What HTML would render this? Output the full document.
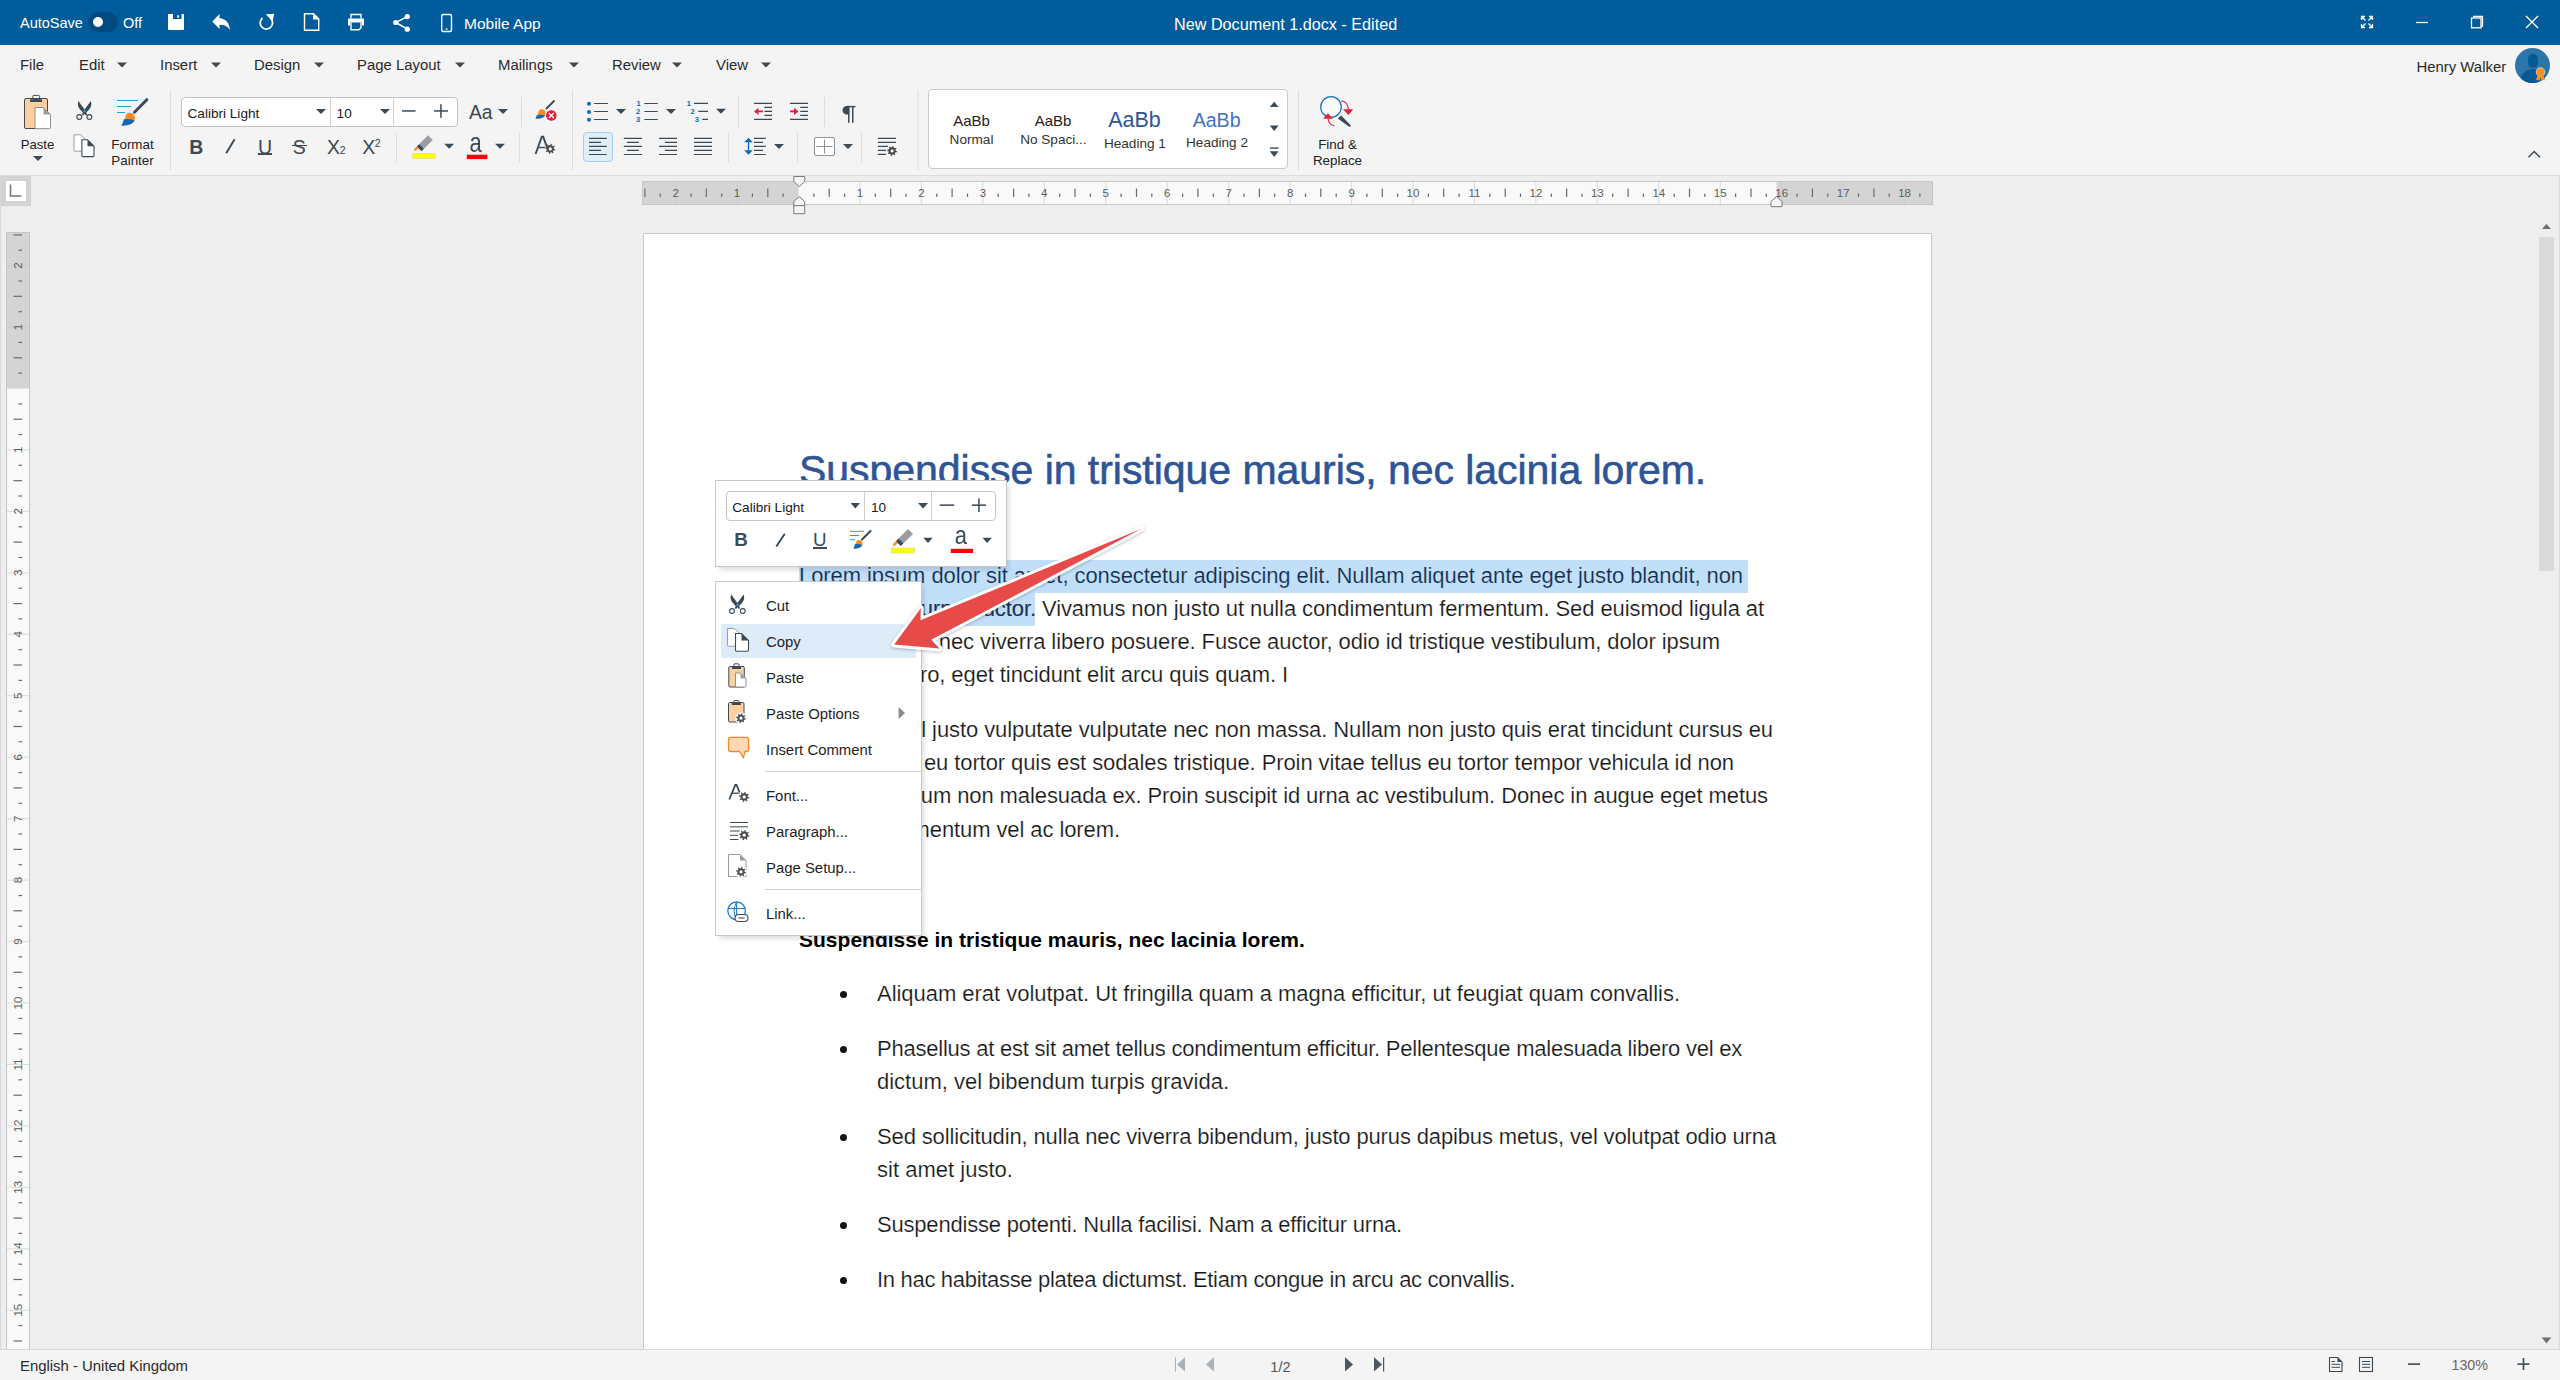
<!DOCTYPE html>
<html><head><meta charset="utf-8">
<style>
*{box-sizing:border-box;margin:0;padding:0}
html,body{width:2560px;height:1380px;overflow:hidden;background:#EEEEEE;font-family:"Liberation Sans",sans-serif;color:#262626;position:relative}
.a{position:absolute}
.t{position:absolute;white-space:nowrap;line-height:1}
svg{position:absolute;overflow:visible}
#title{left:0;top:0;width:2560px;height:45px;background:#015C9B}
#title .t{color:#fff}
#ribbon{left:0;top:45px;width:2560px;height:131px;background:#F4F4F4;border-bottom:1px solid #DCDCDC}
.menu{font-size:15px;color:#2b2b2b}
.caret{position:absolute;width:0;height:0;border-left:5px solid transparent;border-right:5px solid transparent;border-top:5px solid #4A5561}
.sep{position:absolute;width:1px;background:#DADADA}
.lbl{font-size:13.5px;color:#2b2b2b;text-align:center}
#page{left:643px;top:233px;width:1289px;height:1130px;background:#fff;border:1px solid #C6C6C6}
#status{left:0;top:1349px;width:2560px;height:31px;background:#F4F4F4;border-top:1px solid #D8D8D8}
.doc{font-size:21.8px;color:#111}
.rl{display:flex;justify-content:flex-end;overflow:hidden}
.ln{position:absolute;white-space:nowrap;line-height:1;font-size:22px;color:#151515;-webkit-text-stroke:0.2px #fff}
</style></head><body>

<!-- TITLE BAR -->
<div id="title" class="a">
  <div class="t" style="left:20px;top:16.3px;font-size:14.5px">AutoSave</div>
  <div class="a" style="left:88px;top:12px;width:30px;height:20px;border-radius:10px;background:#014A80"></div>
  <div class="a" style="left:93px;top:17px;width:10px;height:10px;border-radius:5px;background:#fff"></div>
  <div class="t" style="left:123px;top:16.3px;font-size:14.5px">Off</div>
  <svg style="left:0;top:0" width="2560" height="45">
    <!-- save -->
    <path d="M168 14H184V29Q184 30 183 30H169Q168 30 168 29Z" fill="#fff"/>
    <rect x="173" y="14" width="8.5" height="5" fill="#015C9B"/>
    <rect x="177.2" y="15.3" width="1.9" height="2.4" fill="#fff"/>
    <!-- undo -->
    <path d="M212.3 21.5L219.5 14V18.3C225.5 18.5 229.5 23 230 30C228 26.5 224.5 24.7 219.5 24.7V29Z" fill="#fff"/>
    <!-- redo circular -->
    <path d="M270.5 18.2A6.2 6.2 0 1 1 262.5 18" fill="none" stroke="#fff" stroke-width="1.8"/>
    <path d="M274.3 13.8L265.8 14.2L272.6 21.2Z" fill="#fff"/>
    <!-- new doc -->
    <path d="M304.5 13.7H313.5L318.7 18.9V30.3H304.5Z" fill="none" stroke="#fff" stroke-width="1.4"/>
    <path d="M313 13.7V19.5H318.7Z" fill="#fff"/>
    <!-- print -->
    <path d="M351 18.5V14.5H361V18.5" fill="none" stroke="#fff" stroke-width="1.4"/>
    <path d="M349 18.5H363Q364 18.5 364 19.5V25.5H362V22.5H350V25.5H348V19.5Q348 18.5 349 18.5Z" fill="#fff"/>
    <path d="M351 22.5V29.8H359L361 27.8V22.5" fill="none" stroke="#fff" stroke-width="1.4"/>
    <!-- share -->
    <path d="M407.3 16.6L395.7 22.5L407.3 29" fill="none" stroke="#fff" stroke-width="1.5"/>
    <circle cx="407.3" cy="16.6" r="2.6" fill="#fff"/>
    <circle cx="395.7" cy="22.5" r="2.6" fill="#fff"/>
    <circle cx="407.3" cy="29.2" r="2.6" fill="#fff"/>
    <!-- phone -->
    <rect x="441.7" y="14.5" width="9.8" height="17" rx="1.5" fill="none" stroke="#fff" stroke-width="1.4"/>
    <rect x="445.6" y="28.5" width="2" height="1.2" fill="#fff"/>
    <!-- fullscreen -->
    <g stroke="#fff" stroke-width="1.3" fill="none">
      <path d="M2361.5 20V16.5H2365M2361.5 16.5L2365.5 20.5"/>
      <path d="M2369 16.5H2372.5V20M2372.5 16.5L2368.5 20.5"/>
      <path d="M2361.5 24V27.5H2365M2361.5 27.5L2365.5 23.5"/>
      <path d="M2369 27.5H2372.5V24M2372.5 27.5L2368.5 23.5"/>
      <!-- minimize -->
      <path d="M2416 22.5H2428"/>
      <!-- restore -->
      <rect x="2471.5" y="18" width="9.5" height="9.8"/>
      <path d="M2473 16.5H2482.5V26.2H2481"/>
      <!-- close -->
      <path d="M2526 16L2538 28M2538 16L2526 28" stroke-width="1.4"/>
    </g>
  </svg>
  <div class="t" style="left:464px;top:15.8px;font-size:15.5px">Mobile App</div>
  <div class="t" style="left:1174px;top:15.8px;font-size:16.2px">New Document 1.docx - Edited</div>
</div>

<!-- RIBBON -->
<div id="ribbon" class="a"></div>
<div id="rib">
<div class="a" style="left:181px;top:97px;width:277px;height:30px;background:#fff;border:1px solid #C4C4C4;border-radius:4px"></div>
<div class="a" style="left:330px;top:98px;width:1px;height:28px;background:#D0D0D0"></div>
<div class="a" style="left:393px;top:98px;width:1px;height:28px;background:#D0D0D0"></div>
<div class="a" style="left:928px;top:89px;width:360px;height:80px;background:#fff;border:1px solid #CACACA;border-radius:4px"></div>
<div class="a" style="left:583px;top:132px;width:30px;height:30px;background:#E1EDF9;border:1px solid #A8CCEE;border-radius:4px"></div>
<div class="t" style="left:20px;top:58.0px;font-size:14.9px;color:#2b2b2b">File</div>
<div class="t" style="left:79px;top:58.0px;font-size:14.9px;color:#2b2b2b">Edit</div>
<div class="t" style="left:160px;top:58.0px;font-size:14.9px;color:#2b2b2b">Insert</div>
<div class="t" style="left:254px;top:58.0px;font-size:14.9px;color:#2b2b2b">Design</div>
<div class="t" style="left:357px;top:58.0px;font-size:14.9px;color:#2b2b2b">Page Layout</div>
<div class="t" style="left:498px;top:58.0px;font-size:14.9px;color:#2b2b2b">Mailings</div>
<div class="t" style="left:612px;top:58.0px;font-size:14.9px;color:#2b2b2b">Review</div>
<div class="t" style="left:716px;top:58.0px;font-size:14.9px;color:#2b2b2b">View</div>
<div class="t" style="left:2416.5px;top:60.1px;font-size:14.9px;color:#2b2b2b">Henry Walker</div>
<div class="t" style="left:-62.5px;width:200px;text-align:center;top:138.4px;font-size:13.2px;color:#222">Paste</div>
<div class="t" style="left:32.5px;width:200px;text-align:center;top:138.1px;font-size:13.4px;color:#222">Format</div>
<div class="t" style="left:32.5px;width:200px;text-align:center;top:154.2px;font-size:13.4px;color:#222">Painter</div>
<div class="t" style="left:1237.5px;width:200px;text-align:center;top:137.8px;font-size:13.4px;color:#222">Find &amp;</div>
<div class="t" style="left:1237.5px;width:200px;text-align:center;top:153.6px;font-size:13.4px;color:#222">Replace</div>
<div class="t" style="left:187.5px;top:107.2px;font-size:13.6px;color:#1a1a1a">Calibri Light</div>
<div class="t" style="left:336.6px;top:107.2px;font-size:13.6px;color:#1a1a1a">10</div>
<div class="t" style="left:871.5px;width:200px;text-align:center;top:113.1px;font-size:15px;color:#222">AaBb</div>
<div class="t" style="left:871.5px;width:200px;text-align:center;top:133.2px;font-size:13.6px;color:#333">Normal</div>
<div class="t" style="left:953px;width:200px;text-align:center;top:113.1px;font-size:15px;color:#222">AaBb</div>
<div class="t" style="left:953.4000000000001px;width:200px;text-align:center;top:133.2px;font-size:13.6px;color:#333">No Spaci...</div>
<div class="t" style="left:1034.5px;width:200px;text-align:center;top:109.8px;font-size:21.5px;color:#2F5496">AaBb</div>
<div class="t" style="left:1034.9px;width:200px;text-align:center;top:136.7px;font-size:13.6px;color:#333">Heading 1</div>
<div class="t" style="left:1116.6px;width:200px;text-align:center;top:111.4px;font-size:19.6px;color:#4472C4">AaBb</div>
<div class="t" style="left:1117px;width:200px;text-align:center;top:136.2px;font-size:13.6px;color:#333">Heading 2</div>
<div class="a" style="left:2515px;top:48px;width:35px;height:35px;border-radius:50%;background:#2C75A8;overflow:hidden"><div class="a" style="left:13px;top:6px;width:10px;height:14px;border-radius:5px;background:#045A96"></div><div class="a" style="left:5px;top:21px;width:26px;height:20px;border-radius:13px 13px 0 0;background:#045A96"></div></div>
<svg style="left:0;top:45px" width="2560" height="131" viewBox="0 45 2560 131">
<g fill="#3C4A55">
<path d="M117 62.5H127L122 67.5Z"/>
<path d="M211 62.5H221L216 67.5Z"/>
<path d="M314 62.5H324L319 67.5Z"/>
<path d="M455 62.5H465L460 67.5Z"/>
<path d="M569 62.5H579L574 67.5Z"/>
<path d="M672 62.5H682L677 67.5Z"/>
<path d="M761 62.5H771L766 67.5Z"/>
<path d="M33.0 155.9H43.0L38 160.9Z"/>
<path d="M316.0 109.0H326.0L321 114.0Z"/>
<path d="M380.0 109.0H390.0L385 114.0Z"/>
<path d="M498.0 109.0H508.0L503 114.0Z"/>
<path d="M444.2 143.8H454.2L449.2 148.8Z"/>
<path d="M495.0 143.8H505.0L500 148.8Z"/>
<path d="M616.0 109.0H626.0L621 114.0Z"/>
<path d="M666.0 109.0H676.0L671 114.0Z"/>
<path d="M716.0 108.8H726.0L721 113.8Z"/>
<path d="M774.0 144.0H784.0L779 149.0Z"/>
<path d="M843.0 144.0H853.0L848 149.0Z"/>
</g>
<rect x="170.0" y="90" width="1" height="80" fill="#DCDCDC"/>
<rect x="572.0" y="90" width="1" height="80" fill="#DCDCDC"/>
<rect x="917.5" y="90" width="1" height="80" fill="#DCDCDC"/>
<rect x="1298.0" y="90" width="1" height="80" fill="#DCDCDC"/>
<rect x="521.0" y="97" width="1" height="30" fill="#DCDCDC"/>
<rect x="396.0" y="133" width="1" height="29" fill="#DCDCDC"/>
<rect x="519.0" y="133" width="1" height="29" fill="#DCDCDC"/>
<rect x="738.0" y="97" width="1" height="30" fill="#DCDCDC"/>
<rect x="824.0" y="97" width="1" height="30" fill="#DCDCDC"/>
<rect x="728.0" y="133" width="1" height="29" fill="#DCDCDC"/>
<rect x="797.0" y="133" width="1" height="29" fill="#DCDCDC"/>
<rect x="861.0" y="133" width="1" height="29" fill="#DCDCDC"/>
<rect x="24.5" y="98.5" width="23" height="30" rx="1.5" fill="#FFD09E" stroke="#3C4A55" stroke-width="1"/>
<rect x="32.8" y="95.4" width="6.8" height="4" rx="1" fill="none" stroke="#3C4A55" stroke-width="1"/>
<rect x="30" y="99.3" width="12" height="2.6" rx="0.5" fill="#3C4A55"/>
<path d="M35 107.5H43.5L50.5 114.5V127.5Q50.5 128.7 49.3 128.7H36.2Q35 128.7 35 127.5Z" fill="#fff" stroke="#8D9296" stroke-width="1"/>
<path d="M43.5 107.5V114.5H50.5Z" fill="#9A9EA2"/>
<path d="M78.4 101Q76.8 105.5 79.7 109L83 112.8L81.8 114.7L83.3 115.5L84.6 113.8L85.9 115.5L87.4 114.7L86.2 112.8L89.5 109Q92.4 105.5 90.8 101L84.6 109.5Z" fill="#3C4A55"/>
<rect x="83.5" y="110" width="2" height="2" fill="#2DA0DE"/>
<circle cx="79.3" cy="117" r="2.4" fill="none" stroke="#3C4A55" stroke-width="1.1"/>
<circle cx="89.4" cy="117" r="2.4" fill="none" stroke="#3C4A55" stroke-width="1.1"/>
<path d="M74 134.8H80.5L85 139V150.5Q85 151.2 84.3 151.2H74.7Q74 151.2 74 150.5Z" fill="#fff" stroke="#9A9EA2" stroke-width="1"/>
<path d="M81.9 139.7H87.5L94 146.2V155.7Q94 156.6 93.1 156.6H82.8Q81.9 156.6 81.9 155.7Z" fill="#fff" stroke="#3C4A55" stroke-width="1.1"/>
<path d="M87.5 139.7V146.2H94Z" fill="#3C4A55"/>
<g stroke="#1EA0E0" stroke-width="1" fill="none"><path d="M117 100.5H138M117 106.5H131M117 112.5H125"/></g>
<path d="M146.8 99.7L134.5 112.2" stroke="#3C4A55" stroke-width="3" stroke-linecap="round"/>
<path d="M128.5 112.8Q135.5 112.2 134.8 119.5Q134 125.5 122 125.7Q125 121 125.5 117Q126 113.2 128.5 112.8Z" fill="#FF8C1A"/>
<path d="M123.8 119.3Q129 118.3 134.5 120.2Q132.5 125.5 121.3 125.7Q123.5 122 123.8 119.3Z" fill="#0B6BBE"/>
<rect x="402" y="110.2" width="13.5" height="1.5" fill="#3C4A55"/>
<rect x="434" y="110.2" width="14" height="1.5" fill="#3C4A55"/><rect x="440.2" y="104.2" width="1.5" height="13.6" fill="#3C4A55"/>
<path d="M554 101L546.5 108.5" stroke="#3C4A55" stroke-width="1.8" stroke-linecap="round"/>
<path d="M540 109.5Q545.5 108.5 545.5 113.5Q545 118.8 535.5 118.8Q537.5 116 538 113.5Q538.5 110 540 109.5Z" fill="#FF8C1A"/>
<path d="M536.8 115.2Q541 114.5 545.2 115.3Q544 118.8 535.5 118.8Z" fill="#0B6BBE"/>
<circle cx="551.3" cy="115.5" r="5.8" fill="#E0213E" stroke="#fff" stroke-width="1"/>
<path d="M548.8 113L553.8 118M553.8 113L548.8 118" stroke="#fff" stroke-width="1.4"/>
<path d="M428 135.2L432.8 140L424 148.8L419.3 144Z" fill="#9A9EA2"/>
<path d="M419.3 144L424 148.8L421.5 151.3L416.8 146.5Z" fill="#3C4A55"/>
<path d="M416.8 146.5L418.5 148.3L416 150.5L414 150.8L414.3 148.8Z" fill="#FF8C1A"/>
<rect x="412.5" y="153.6" width="23" height="5" fill="#FFFF00" stroke="#D8D8A0" stroke-width="0.6"/>
<rect x="466.8" y="154.7" width="20.5" height="4.4" fill="#FF0000"/>
<path d="M535.6 154L541.8 136.8H543.2L548.2 150.5" fill="none" stroke="#3C4A55" stroke-width="1.9"/><path d="M538.3 147.5H545" stroke="#3C4A55" stroke-width="1.4"/>
<path d="M553.97 148.90L555.38 149.38L555.17 150.40L553.69 150.31L553.35 150.94L552.90 151.50L553.55 152.83L552.69 153.41L551.71 152.29L551.02 152.50L550.30 152.57L549.82 153.98L548.80 153.77L548.89 152.29L548.26 151.95L547.70 151.50L546.37 152.15L545.79 151.29L546.91 150.31L546.70 149.62L546.63 148.90L545.22 148.42L545.43 147.40L546.91 147.49L547.25 146.86L547.70 146.30L547.05 144.97L547.91 144.39L548.89 145.51L549.58 145.30L550.30 145.23L550.78 143.82L551.80 144.03L551.71 145.51L552.34 145.85L552.90 146.30L554.23 145.65L554.81 146.51L553.69 147.49L553.90 148.18ZM551.93 148.90A1.63 1.63 0 1 0 548.67 148.90A1.63 1.63 0 1 0 551.93 148.90Z" fill="#4D4D4D" fill-rule="evenodd"/>
<g fill="#0B6BBE"><circle cx="589" cy="103.8" r="2"/><circle cx="589" cy="112" r="2"/><circle cx="589" cy="119.8" r="2"/></g>
<g stroke="#3C4A55" stroke-width="1.2"><path d="M594 103.5H608M594 111.5H608M594 119.5H608"/>
<path d="M644.3 103.5H657.8M644.3 111.5H657.8M644.3 119.5H657.8"/>
<path d="M694 103.4H708M698.3 111.4H708M702.3 119.3H708"/></g>
<g fill="#0B6BBE" font-family="Liberation Sans" font-weight="bold">
<text x="636.5" y="106.3" font-size="7.5">1</text><text x="636" y="114.3" font-size="7.5">2</text><text x="636" y="122.3" font-size="7.5">3</text>
<text x="686.7" y="106.3" font-size="7.5">1</text><text x="690.5" y="114.3" font-size="7.5">2</text><text x="694.8" y="122.3" font-size="7.5">3</text>
</g>
<g stroke="#3C4A55" stroke-width="1.2"><path d="M754 103.4H772M764.4 107.3H772M764.4 111.4H772M764.4 115.3H772M754 119.3H772"/>
<path d="M790 103.4H808M800.2 107.3H808M800.2 111.4H808M800.2 115.3H808M790 119.3H808"/></g>
<path d="M754 111.4L758.5 107.8V110.6H763V112.2H758.5V115Z" fill="#E0213E"/>
<path d="M798.6 111.4L794 107.8V110.6H790V112.2H794V115Z" fill="#E0213E"/>
<path d="M849.2 105.9H846.8A4.3 4.3 0 0 0 846.8 114.5H849.2Z" fill="#3C4A55"/><rect x="848" y="105.9" width="1.5" height="16.9" fill="#3C4A55"/><rect x="852" y="105.9" width="1.5" height="16.9" fill="#3C4A55"/><rect x="846.5" y="105.9" width="9" height="1.4" fill="#3C4A55"/>

<path d="M589 138.3H606.8M589 142.4H601M589 146.3H606.8M589 150.4H601M589 154.5H606.8M623.8 138.3H642M626.9 142.4H638.9M623.8 146.3H642M626.9 150.4H638.9M623.8 154.5H642M659 138.3H677M665 142.4H677M659 146.3H677M665 150.4H677M659 154.5H677M694 138.3H712M694 142.4H712M694 146.3H712M694 150.4H712M694 154.5H712" stroke="#3C4A55" stroke-width="1.2"/>
<path d="M754 138.3H765.8M754 142.4H763M754 146.3H765.8M754 150.4H763M754 154.5H765.8" stroke="#3C4A55" stroke-width="1.2"/>
<path d="M748.5 137.8L744.2 142.3H752.8Z M748.5 154.7L744.2 150.2H752.8Z" fill="#0B6BBE"/><rect x="747.8" y="141" width="1.4" height="10" fill="#0B6BBE"/>
<rect x="814.5" y="137.5" width="20" height="18" rx="1.5" fill="#fff" stroke="#8D9296" stroke-width="1"/>
<path d="M824.5 139.5V153.5M816.5 146.5H832.5" stroke="#8D9296" stroke-width="1"/>
<path d="M877.8 138.3H896M877.8 142.3H896M877.8 146.3H888M877.8 150.3H886M877.8 154.3H886" stroke="#3C4A55" stroke-width="1.2"/>
<circle cx="892.1" cy="150.9" r="6" fill="#F4F4F4"/><path d="M895.70 150.90L897.08 151.37L896.88 152.37L895.43 152.28L895.09 152.90L894.65 153.45L895.29 154.75L894.44 155.32L893.48 154.23L892.80 154.43L892.10 154.50L891.63 155.88L890.63 155.68L890.72 154.23L890.10 153.89L889.55 153.45L888.25 154.09L887.68 153.24L888.77 152.28L888.57 151.60L888.50 150.90L887.12 150.43L887.32 149.43L888.77 149.52L889.11 148.90L889.55 148.35L888.91 147.05L889.76 146.48L890.72 147.57L891.40 147.37L892.10 147.30L892.57 145.92L893.57 146.12L893.48 147.57L894.10 147.91L894.65 148.35L895.95 147.71L896.52 148.56L895.43 149.52L895.63 150.20ZM893.70 150.90A1.60 1.60 0 1 0 890.50 150.90A1.60 1.60 0 1 0 893.70 150.90Z" fill="#444" fill-rule="evenodd"/>
<g fill="#3C4A55"><path d="M1269.8 107H1278.6L1274.2 101.7Z"/><path d="M1269.8 125.4H1278.6L1274.2 131Z"/>
<rect x="1269.8" y="147.4" width="8.8" height="1.4"/><path d="M1269.8 151.2H1278.6L1274.2 157Z"/></g>
<circle cx="1331" cy="107" r="10.3" fill="#FAFAFA" stroke="#1A72BD" stroke-width="1.2"/>
<path d="M1341.2 115.6L1337.8 118.4L1348.8 126.6Q1350.6 127.4 1350.9 125.6Z" fill="#3C4A55"/>
<path d="M1341.4 100.8Q1348 102 1348.4 109.5" fill="none" stroke="#E0213E" stroke-width="1.1"/>
<path d="M1343 109.3H1353.2L1348.4 115Z" fill="#E0213E"/>
<path d="M1334.4 125.8Q1329 125 1328 118.5" fill="none" stroke="#E0213E" stroke-width="1.1"/>
<path d="M1323 118.8H1333L1328 113.2Z" fill="#E0213E"/>
<path d="M2528.5 157.3L2534.2 151.5L2540 157.3" fill="none" stroke="#3C4A55" stroke-width="1.5"/>
<circle cx="2540.5" cy="72" r="4.3" fill="#FF8C1A" stroke="#fff" stroke-width="0.6"/>
<path d="M2537.5 75L2535.8 80.5L2538.3 79.8L2539.5 81.5L2540.8 76.3Z M2543.5 75L2545.2 80.5L2542.7 79.8L2541.5 81.5L2540.2 76.3Z" fill="#FF8C1A"/>
</svg>
<div class="t" style="left:189.3px;top:137.5px;font-size:19.5px;font-weight:bold;color:#3C4A55">B</div>
<svg style="left:0;top:0" width="300" height="200"><path d="M234.6 139.2L226.2 153.2" stroke="#3C4A55" stroke-width="1.9"/></svg>
<div class="t" style="left:258px;top:137.5px;font-size:19.5px;color:#3C4A55">U</div>
<div class="a" style="left:258px;top:153.2px;width:14px;height:1.8px;background:#3C4A55"></div>
<div class="t" style="left:292.7px;top:137.5px;font-size:19.5px;color:#3C4A55">S</div>
<div class="a" style="left:292px;top:144.5px;width:15px;height:1.3px;background:#3C4A55"></div>
<div class="t" style="left:327px;top:137.5px;font-size:19.5px;color:#3C4A55">X</div>
<div class="t" style="left:339.8px;top:144.9px;font-size:10.5px;color:#3C4A55">2</div>
<div class="t" style="left:362.3px;top:137.5px;font-size:19.5px;color:#3C4A55">X</div>
<div class="t" style="left:374.8px;top:137.9px;font-size:10.5px;color:#3C4A55">2</div>
<div class="t" style="left:469px;top:102.9px;font-size:19.3px;color:#3C4A55">Aa</div>
<div class="t" style="left:469.5px;top:133.6px;font-size:22px;color:#3C4A55;transform:scaleY(1.22);transform-origin:0 18.6px">a</div>
</div>

<!-- RULER AREA -->
<svg style="left:0;top:0" width="2560" height="1380">
<rect x="1" y="176" width="30" height="30" fill="#D3D3D3"/><rect x="6" y="181" width="20" height="20" fill="#fff"/><path d="M10.5 184.5V196H21.5" fill="none" stroke="#7A7A7A" stroke-width="1.6"/>
<rect x="0" y="176" width="1" height="1174" fill="#D8D8D8"/>
<rect x="642.5" y="181.5" width="1290" height="23" fill="#D4D4D4" stroke="#C6C6C6" stroke-width="1"/>
<rect x="798.5" y="182" width="978.0" height="22" fill="#F9F9F9"/>
<rect x="675.1" y="182" width="1" height="22" fill="#C8C8C8" opacity="0.6"/><rect x="644.3" y="188.5" width="1.2" height="8.5" fill="#6B6B6B"/><rect x="659.6" y="193.5" width="1.2" height="3.5" fill="#6B6B6B"/><rect x="736.5" y="182" width="1" height="22" fill="#C8C8C8" opacity="0.6"/><rect x="690.4" y="193.5" width="1.2" height="3.5" fill="#6B6B6B"/><rect x="705.7" y="188.5" width="1.2" height="8.5" fill="#6B6B6B"/><rect x="721.1" y="193.5" width="1.2" height="3.5" fill="#6B6B6B"/><rect x="751.8" y="193.5" width="1.2" height="3.5" fill="#6B6B6B"/><rect x="767.2" y="188.5" width="1.2" height="8.5" fill="#6B6B6B"/><rect x="782.5" y="193.5" width="1.2" height="3.5" fill="#6B6B6B"/><rect x="859.5" y="182" width="1" height="22" fill="#C8C8C8" opacity="0.6"/><rect x="813.3" y="193.5" width="1.2" height="3.5" fill="#6B6B6B"/><rect x="828.6" y="188.5" width="1.2" height="8.5" fill="#6B6B6B"/><rect x="844.0" y="193.5" width="1.2" height="3.5" fill="#6B6B6B"/><rect x="920.9" y="182" width="1" height="22" fill="#C8C8C8" opacity="0.6"/><rect x="874.7" y="193.5" width="1.2" height="3.5" fill="#6B6B6B"/><rect x="890.1" y="188.5" width="1.2" height="8.5" fill="#6B6B6B"/><rect x="905.4" y="193.5" width="1.2" height="3.5" fill="#6B6B6B"/><rect x="982.4" y="182" width="1" height="22" fill="#C8C8C8" opacity="0.6"/><rect x="936.2" y="193.5" width="1.2" height="3.5" fill="#6B6B6B"/><rect x="951.5" y="188.5" width="1.2" height="8.5" fill="#6B6B6B"/><rect x="966.9" y="193.5" width="1.2" height="3.5" fill="#6B6B6B"/><rect x="1043.8" y="182" width="1" height="22" fill="#C8C8C8" opacity="0.6"/><rect x="997.6" y="193.5" width="1.2" height="3.5" fill="#6B6B6B"/><rect x="1013.0" y="188.5" width="1.2" height="8.5" fill="#6B6B6B"/><rect x="1028.3" y="193.5" width="1.2" height="3.5" fill="#6B6B6B"/><rect x="1105.2" y="182" width="1" height="22" fill="#C8C8C8" opacity="0.6"/><rect x="1059.1" y="193.5" width="1.2" height="3.5" fill="#6B6B6B"/><rect x="1074.4" y="188.5" width="1.2" height="8.5" fill="#6B6B6B"/><rect x="1089.8" y="193.5" width="1.2" height="3.5" fill="#6B6B6B"/><rect x="1166.7" y="182" width="1" height="22" fill="#C8C8C8" opacity="0.6"/><rect x="1120.5" y="193.5" width="1.2" height="3.5" fill="#6B6B6B"/><rect x="1135.9" y="188.5" width="1.2" height="8.5" fill="#6B6B6B"/><rect x="1151.2" y="193.5" width="1.2" height="3.5" fill="#6B6B6B"/><rect x="1228.2" y="182" width="1" height="22" fill="#C8C8C8" opacity="0.6"/><rect x="1182.0" y="193.5" width="1.2" height="3.5" fill="#6B6B6B"/><rect x="1197.3" y="188.5" width="1.2" height="8.5" fill="#6B6B6B"/><rect x="1212.7" y="193.5" width="1.2" height="3.5" fill="#6B6B6B"/><rect x="1289.6" y="182" width="1" height="22" fill="#C8C8C8" opacity="0.6"/><rect x="1243.4" y="193.5" width="1.2" height="3.5" fill="#6B6B6B"/><rect x="1258.8" y="188.5" width="1.2" height="8.5" fill="#6B6B6B"/><rect x="1274.1" y="193.5" width="1.2" height="3.5" fill="#6B6B6B"/><rect x="1351.1" y="182" width="1" height="22" fill="#C8C8C8" opacity="0.6"/><rect x="1304.9" y="193.5" width="1.2" height="3.5" fill="#6B6B6B"/><rect x="1320.2" y="188.5" width="1.2" height="8.5" fill="#6B6B6B"/><rect x="1335.6" y="193.5" width="1.2" height="3.5" fill="#6B6B6B"/><rect x="1412.5" y="182" width="1" height="22" fill="#C8C8C8" opacity="0.6"/><rect x="1366.3" y="193.5" width="1.2" height="3.5" fill="#6B6B6B"/><rect x="1381.7" y="188.5" width="1.2" height="8.5" fill="#6B6B6B"/><rect x="1397.0" y="193.5" width="1.2" height="3.5" fill="#6B6B6B"/><rect x="1474.0" y="182" width="1" height="22" fill="#C8C8C8" opacity="0.6"/><rect x="1427.8" y="193.5" width="1.2" height="3.5" fill="#6B6B6B"/><rect x="1443.1" y="188.5" width="1.2" height="8.5" fill="#6B6B6B"/><rect x="1458.5" y="193.5" width="1.2" height="3.5" fill="#6B6B6B"/><rect x="1535.4" y="182" width="1" height="22" fill="#C8C8C8" opacity="0.6"/><rect x="1489.2" y="193.5" width="1.2" height="3.5" fill="#6B6B6B"/><rect x="1504.6" y="188.5" width="1.2" height="8.5" fill="#6B6B6B"/><rect x="1519.9" y="193.5" width="1.2" height="3.5" fill="#6B6B6B"/><rect x="1596.8" y="182" width="1" height="22" fill="#C8C8C8" opacity="0.6"/><rect x="1550.7" y="193.5" width="1.2" height="3.5" fill="#6B6B6B"/><rect x="1566.0" y="188.5" width="1.2" height="8.5" fill="#6B6B6B"/><rect x="1581.4" y="193.5" width="1.2" height="3.5" fill="#6B6B6B"/><rect x="1658.3" y="182" width="1" height="22" fill="#C8C8C8" opacity="0.6"/><rect x="1612.1" y="193.5" width="1.2" height="3.5" fill="#6B6B6B"/><rect x="1627.5" y="188.5" width="1.2" height="8.5" fill="#6B6B6B"/><rect x="1642.8" y="193.5" width="1.2" height="3.5" fill="#6B6B6B"/><rect x="1719.8" y="182" width="1" height="22" fill="#C8C8C8" opacity="0.6"/><rect x="1673.6" y="193.5" width="1.2" height="3.5" fill="#6B6B6B"/><rect x="1688.9" y="188.5" width="1.2" height="8.5" fill="#6B6B6B"/><rect x="1704.3" y="193.5" width="1.2" height="3.5" fill="#6B6B6B"/><rect x="1781.2" y="182" width="1" height="22" fill="#C8C8C8" opacity="0.6"/><rect x="1735.0" y="193.5" width="1.2" height="3.5" fill="#6B6B6B"/><rect x="1750.4" y="188.5" width="1.2" height="8.5" fill="#6B6B6B"/><rect x="1765.7" y="193.5" width="1.2" height="3.5" fill="#6B6B6B"/><rect x="1842.7" y="182" width="1" height="22" fill="#C8C8C8" opacity="0.6"/><rect x="1796.5" y="193.5" width="1.2" height="3.5" fill="#6B6B6B"/><rect x="1811.8" y="188.5" width="1.2" height="8.5" fill="#6B6B6B"/><rect x="1827.2" y="193.5" width="1.2" height="3.5" fill="#6B6B6B"/><rect x="1904.1" y="182" width="1" height="22" fill="#C8C8C8" opacity="0.6"/><rect x="1857.9" y="193.5" width="1.2" height="3.5" fill="#6B6B6B"/><rect x="1873.3" y="188.5" width="1.2" height="8.5" fill="#6B6B6B"/><rect x="1888.6" y="193.5" width="1.2" height="3.5" fill="#6B6B6B"/>
<rect x="1919.3" y="193.5" width="1.2" height="3.5" fill="#6B6B6B"/>
<g font-family="Liberation Sans" fill="#5E5E5E"><text x="675.6" y="197.3" font-size="11.5" text-anchor="middle">2</text><text x="737.0" y="197.3" font-size="11.5" text-anchor="middle">1</text><text x="860.0" y="197.3" font-size="11.5" text-anchor="middle">1</text><text x="921.4" y="197.3" font-size="11.5" text-anchor="middle">2</text><text x="982.9" y="197.3" font-size="11.5" text-anchor="middle">3</text><text x="1044.3" y="197.3" font-size="11.5" text-anchor="middle">4</text><text x="1105.8" y="197.3" font-size="11.5" text-anchor="middle">5</text><text x="1167.2" y="197.3" font-size="11.5" text-anchor="middle">6</text><text x="1228.7" y="197.3" font-size="11.5" text-anchor="middle">7</text><text x="1290.1" y="197.3" font-size="11.5" text-anchor="middle">8</text><text x="1351.6" y="197.3" font-size="11.5" text-anchor="middle">9</text><text x="1413.0" y="197.3" font-size="11.5" text-anchor="middle">10</text><text x="1474.5" y="197.3" font-size="11.5" text-anchor="middle">11</text><text x="1535.9" y="197.3" font-size="11.5" text-anchor="middle">12</text><text x="1597.3" y="197.3" font-size="11.5" text-anchor="middle">13</text><text x="1658.8" y="197.3" font-size="11.5" text-anchor="middle">14</text><text x="1720.2" y="197.3" font-size="11.5" text-anchor="middle">15</text><text x="1781.7" y="197.3" font-size="11.5" text-anchor="middle">16</text><text x="1843.2" y="197.3" font-size="11.5" text-anchor="middle">17</text><text x="1904.6" y="197.3" font-size="11.5" text-anchor="middle">18</text></g>
<path d="M793.8 176.5H804.7V181.5L799.2 186.5L793.8 181.5Z" fill="#F4F4F4" stroke="#7A7A7A" stroke-width="1"/>
<path d="M799.2 196.6L804.7 201.5V213.7H793.8V201.5Z M793.8 205.6H804.7" fill="#F4F4F4" stroke="#7A7A7A" stroke-width="1"/>
<path d="M1776.5 196.6L1782 201.5V206.7H1771V201.5Z" fill="#F4F4F4" stroke="#7A7A7A" stroke-width="1"/>
<rect x="6.5" y="232.5" width="23" height="1130" fill="#F9F9F9" stroke="#C6C6C6" stroke-width="1"/>
<rect x="7" y="233" width="22" height="155.5" fill="#D4D4D4"/>
<rect x="7" y="265.1" width="22" height="1" fill="#C8C8C8" opacity="0.6"/><rect x="13.5" y="234.3" width="8.5" height="1.2" fill="#6B6B6B"/><rect x="18.5" y="249.6" width="3.5" height="1.2" fill="#6B6B6B"/><rect x="7" y="326.6" width="22" height="1" fill="#C8C8C8" opacity="0.6"/><rect x="18.5" y="280.4" width="3.5" height="1.2" fill="#6B6B6B"/><rect x="13.5" y="295.7" width="8.5" height="1.2" fill="#6B6B6B"/><rect x="18.5" y="311.1" width="3.5" height="1.2" fill="#6B6B6B"/><rect x="18.5" y="341.8" width="3.5" height="1.2" fill="#6B6B6B"/><rect x="13.5" y="357.2" width="8.5" height="1.2" fill="#6B6B6B"/><rect x="18.5" y="372.5" width="3.5" height="1.2" fill="#6B6B6B"/><rect x="7" y="449.4" width="22" height="1" fill="#C8C8C8" opacity="0.6"/><rect x="18.5" y="403.3" width="3.5" height="1.2" fill="#6B6B6B"/><rect x="13.5" y="418.6" width="8.5" height="1.2" fill="#6B6B6B"/><rect x="18.5" y="434.0" width="3.5" height="1.2" fill="#6B6B6B"/><rect x="7" y="510.9" width="22" height="1" fill="#C8C8C8" opacity="0.6"/><rect x="18.5" y="464.7" width="3.5" height="1.2" fill="#6B6B6B"/><rect x="13.5" y="480.1" width="8.5" height="1.2" fill="#6B6B6B"/><rect x="18.5" y="495.4" width="3.5" height="1.2" fill="#6B6B6B"/><rect x="7" y="572.4" width="22" height="1" fill="#C8C8C8" opacity="0.6"/><rect x="18.5" y="526.2" width="3.5" height="1.2" fill="#6B6B6B"/><rect x="13.5" y="541.5" width="8.5" height="1.2" fill="#6B6B6B"/><rect x="18.5" y="556.9" width="3.5" height="1.2" fill="#6B6B6B"/><rect x="7" y="633.8" width="22" height="1" fill="#C8C8C8" opacity="0.6"/><rect x="18.5" y="587.6" width="3.5" height="1.2" fill="#6B6B6B"/><rect x="13.5" y="603.0" width="8.5" height="1.2" fill="#6B6B6B"/><rect x="18.5" y="618.3" width="3.5" height="1.2" fill="#6B6B6B"/><rect x="7" y="695.2" width="22" height="1" fill="#C8C8C8" opacity="0.6"/><rect x="18.5" y="649.1" width="3.5" height="1.2" fill="#6B6B6B"/><rect x="13.5" y="664.4" width="8.5" height="1.2" fill="#6B6B6B"/><rect x="18.5" y="679.8" width="3.5" height="1.2" fill="#6B6B6B"/><rect x="7" y="756.7" width="22" height="1" fill="#C8C8C8" opacity="0.6"/><rect x="18.5" y="710.5" width="3.5" height="1.2" fill="#6B6B6B"/><rect x="13.5" y="725.9" width="8.5" height="1.2" fill="#6B6B6B"/><rect x="18.5" y="741.2" width="3.5" height="1.2" fill="#6B6B6B"/><rect x="7" y="818.2" width="22" height="1" fill="#C8C8C8" opacity="0.6"/><rect x="18.5" y="772.0" width="3.5" height="1.2" fill="#6B6B6B"/><rect x="13.5" y="787.3" width="8.5" height="1.2" fill="#6B6B6B"/><rect x="18.5" y="802.7" width="3.5" height="1.2" fill="#6B6B6B"/><rect x="7" y="879.6" width="22" height="1" fill="#C8C8C8" opacity="0.6"/><rect x="18.5" y="833.4" width="3.5" height="1.2" fill="#6B6B6B"/><rect x="13.5" y="848.8" width="8.5" height="1.2" fill="#6B6B6B"/><rect x="18.5" y="864.1" width="3.5" height="1.2" fill="#6B6B6B"/><rect x="7" y="941.1" width="22" height="1" fill="#C8C8C8" opacity="0.6"/><rect x="18.5" y="894.9" width="3.5" height="1.2" fill="#6B6B6B"/><rect x="13.5" y="910.2" width="8.5" height="1.2" fill="#6B6B6B"/><rect x="18.5" y="925.6" width="3.5" height="1.2" fill="#6B6B6B"/><rect x="7" y="1002.5" width="22" height="1" fill="#C8C8C8" opacity="0.6"/><rect x="18.5" y="956.3" width="3.5" height="1.2" fill="#6B6B6B"/><rect x="13.5" y="971.7" width="8.5" height="1.2" fill="#6B6B6B"/><rect x="18.5" y="987.0" width="3.5" height="1.2" fill="#6B6B6B"/><rect x="7" y="1064.0" width="22" height="1" fill="#C8C8C8" opacity="0.6"/><rect x="18.5" y="1017.8" width="3.5" height="1.2" fill="#6B6B6B"/><rect x="13.5" y="1033.1" width="8.5" height="1.2" fill="#6B6B6B"/><rect x="18.5" y="1048.5" width="3.5" height="1.2" fill="#6B6B6B"/><rect x="7" y="1125.4" width="22" height="1" fill="#C8C8C8" opacity="0.6"/><rect x="18.5" y="1079.2" width="3.5" height="1.2" fill="#6B6B6B"/><rect x="13.5" y="1094.6" width="8.5" height="1.2" fill="#6B6B6B"/><rect x="18.5" y="1109.9" width="3.5" height="1.2" fill="#6B6B6B"/><rect x="7" y="1186.8" width="22" height="1" fill="#C8C8C8" opacity="0.6"/><rect x="18.5" y="1140.7" width="3.5" height="1.2" fill="#6B6B6B"/><rect x="13.5" y="1156.0" width="8.5" height="1.2" fill="#6B6B6B"/><rect x="18.5" y="1171.4" width="3.5" height="1.2" fill="#6B6B6B"/><rect x="7" y="1248.3" width="22" height="1" fill="#C8C8C8" opacity="0.6"/><rect x="18.5" y="1202.1" width="3.5" height="1.2" fill="#6B6B6B"/><rect x="13.5" y="1217.5" width="8.5" height="1.2" fill="#6B6B6B"/><rect x="18.5" y="1232.8" width="3.5" height="1.2" fill="#6B6B6B"/><rect x="7" y="1309.8" width="22" height="1" fill="#C8C8C8" opacity="0.6"/><rect x="18.5" y="1263.6" width="3.5" height="1.2" fill="#6B6B6B"/><rect x="13.5" y="1278.9" width="8.5" height="1.2" fill="#6B6B6B"/><rect x="18.5" y="1294.3" width="3.5" height="1.2" fill="#6B6B6B"/><rect x="18.5" y="1325.0" width="3.5" height="1.2" fill="#6B6B6B"/><rect x="13.5" y="1340.4" width="8.5" height="1.2" fill="#6B6B6B"/>
<g font-family="Liberation Sans" fill="#5E5E5E"><text transform="translate(22.3 265.6) rotate(-90)" font-size="11.5" text-anchor="middle">2</text><text transform="translate(22.3 327.1) rotate(-90)" font-size="11.5" text-anchor="middle">1</text><text transform="translate(22.3 449.9) rotate(-90)" font-size="11.5" text-anchor="middle">1</text><text transform="translate(22.3 511.4) rotate(-90)" font-size="11.5" text-anchor="middle">2</text><text transform="translate(22.3 572.9) rotate(-90)" font-size="11.5" text-anchor="middle">3</text><text transform="translate(22.3 634.3) rotate(-90)" font-size="11.5" text-anchor="middle">4</text><text transform="translate(22.3 695.8) rotate(-90)" font-size="11.5" text-anchor="middle">5</text><text transform="translate(22.3 757.2) rotate(-90)" font-size="11.5" text-anchor="middle">6</text><text transform="translate(22.3 818.7) rotate(-90)" font-size="11.5" text-anchor="middle">7</text><text transform="translate(22.3 880.1) rotate(-90)" font-size="11.5" text-anchor="middle">8</text><text transform="translate(22.3 941.6) rotate(-90)" font-size="11.5" text-anchor="middle">9</text><text transform="translate(22.3 1003.0) rotate(-90)" font-size="11.5" text-anchor="middle">10</text><text transform="translate(22.3 1064.5) rotate(-90)" font-size="11.5" text-anchor="middle">11</text><text transform="translate(22.3 1125.9) rotate(-90)" font-size="11.5" text-anchor="middle">12</text><text transform="translate(22.3 1187.3) rotate(-90)" font-size="11.5" text-anchor="middle">13</text><text transform="translate(22.3 1248.8) rotate(-90)" font-size="11.5" text-anchor="middle">14</text><text transform="translate(22.3 1310.2) rotate(-90)" font-size="11.5" text-anchor="middle">15</text></g>
<path d="M2542 228.9H2551L2546.5 223.9Z" fill="#6E6E6E"/><rect x="2539" y="237" width="15" height="334" fill="#DADADA"/>
<path d="M2541.6 1337.6H2551.3L2546.5 1343.2Z" fill="#6E6E6E"/><rect x="2559" y="176" width="1" height="1174" fill="#DCDCDC"/>
</svg>
<!-- PAGE -->
<div class="a" style="left:643px;top:233px;width:1289px;height:1130px;background:#fff;border:1px solid #C8C8C8"></div>
<div class="a" style="left:799px;top:560px;width:949px;height:33px;background:#C2DFFA"></div>
<div class="a" style="left:799px;top:593px;width:236px;height:33px;background:#C2DFFA"></div>
<div class="t" style="left:799px;top:449.8px;font-size:41px;color:#2F5496;letter-spacing:-0.04px;-webkit-text-stroke:0.6px #2F5496">Suspendisse in tristique mauris, nec lacinia lorem.</div>
<div class="t" style="left:799px;top:929.0px;font-size:21px;color:#000;font-weight:bold;letter-spacing:0.01px">Suspendisse in tristique mauris, nec lacinia lorem.</div>
<div class="ln" style="color:#0F2D4B;-webkit-text-stroke-color:#C2DFFA;left:799px;top:564.7px;letter-spacing:-0.074px">Lorem ipsum dolor sit amet, consectetur adipiscing elit. Nullam aliquet ante eget justo blandit, non</div>
<div class="ln rl" style="left:799px;width:965px;top:597.9px;letter-spacing:-0.090px"><span>mollis urna auctor. Vivamus non justo ut nulla condimentum fermentum. Sed euismod ligula at</span></div>
<div class="ln rl" style="left:799px;width:921px;top:631.1px;letter-spacing:-0.090px"><span>tempus ut arcu nec viverra libero posuere. Fusce auctor, odio id tristique vestibulum, dolor ipsum</span></div>
<div class="ln rl" style="left:799px;width:489px;top:664.3px;letter-spacing:-0.090px"><span>sit amet libero, eget tincidunt elit arcu quis quam. I</span></div>
<div class="ln rl" style="left:799px;width:974px;top:719.0px;letter-spacing:-0.090px"><span>Cras tempor vel justo vulputate vulputate nec non massa. Nullam non justo quis erat tincidunt cursus eu</span></div>
<div class="ln rl" style="left:799px;width:935px;top:752.2px;letter-spacing:-0.090px"><span>egestas, eu tortor quis est sodales tristique. Proin vitae tellus eu tortor tempor vehicula id non</span></div>
<div class="ln rl" style="left:799px;width:969px;top:785.4px;letter-spacing:-0.090px"><span>Nunc vestibulum non malesuada ex. Proin suscipit id urna ac vestibulum. Donec in augue eget metus</span></div>
<div class="ln rl" style="left:799px;width:321px;top:818.6px;letter-spacing:-0.090px"><span>Etiam fermentum vel ac lorem.</span></div>
<div class="ln" style="left:877px;top:983.1px;letter-spacing:-0.029px">Aliquam erat volutpat. Ut fringilla quam a magna efficitur, ut feugiat quam convallis.</div>
<div class="ln" style="left:877px;top:1038.0px;letter-spacing:-0.230px">Phasellus at est sit amet tellus condimentum efficitur. Pellentesque malesuada libero vel ex</div>
<div class="ln" style="left:877px;top:1071.2px;letter-spacing:-0.005px">dictum, vel bibendum turpis gravida.</div>
<div class="ln" style="left:877px;top:1126.1px;letter-spacing:-0.140px">Sed sollicitudin, nulla nec viverra bibendum, justo purus dapibus metus, vel volutpat odio urna</div>
<div class="ln" style="left:877px;top:1159.3px;letter-spacing:0.019px">sit amet justo.</div>
<div class="ln" style="left:877px;top:1214.2px;letter-spacing:-0.197px">Suspendisse potenti. Nulla facilisi. Nam a efficitur urna.</div>
<div class="ln" style="left:877px;top:1269.1px;letter-spacing:-0.311px">In hac habitasse platea dictumst. Etiam congue in arcu ac convallis.</div>
<div class="a" style="left:839.5px;top:990.9px;width:7px;height:7px;border-radius:50%;background:#111"></div>
<div class="a" style="left:839.5px;top:1045.8px;width:7px;height:7px;border-radius:50%;background:#111"></div>
<div class="a" style="left:839.5px;top:1133.9px;width:7px;height:7px;border-radius:50%;background:#111"></div>
<div class="a" style="left:839.5px;top:1222.0px;width:7px;height:7px;border-radius:50%;background:#111"></div>
<div class="a" style="left:839.5px;top:1276.9px;width:7px;height:7px;border-radius:50%;background:#111"></div>
<div class="a" style="left:799px;top:593px;width:237px;height:33px;overflow:hidden"><div class="ln rl" style="left:0;width:965px;top:4.9px;letter-spacing:-0.090px;color:#0F2D4B;-webkit-text-stroke-color:#C2DFFA"><span>mollis urna auctor. Vivamus non justo ut nulla condimentum fermentum. Sed euismod ligula at</span></div></div>

<!--OVERLAYS-->
<div class="a" style="left:0;top:1349px;width:2560px;height:31px;background:#F4F4F4;border-top:1px solid #D8D8D8"></div>
<div class="t" style="left:20px;top:1359.4px;font-size:14.9px;color:#2b2b2b">English - United Kingdom</div>
<div class="t" style="left:1270.3px;top:1359.9px;font-size:14.6px;color:#555">1/2</div>
<div class="t" style="left:2451.5px;top:1358.4px;font-size:14.2px;color:#666">130%</div>
<svg style="left:0;top:0" width="2560" height="1380">
<rect x="1175" y="1357.3" width="1" height="14.3" fill="#A9B0B6"/><path d="M1185 1357.3V1371.6L1177 1364.5Z" fill="#A9B0B6"/>
<path d="M1214 1357.3V1371.6L1206 1364.5Z" fill="#A9B0B6"/>
<path d="M1345 1357.3V1371.6L1353 1364.5Z" fill="#4A5866"/>
<path d="M1374 1357.3V1371.6L1382 1364.5Z" fill="#4A5866"/><rect x="1383" y="1357.3" width="1.2" height="14.3" fill="#4A5866"/>
<path d="M2329.5 1357.5H2337.5L2342 1362V1371.5H2329.5Z" fill="none" stroke="#3C4A55" stroke-width="1.1"/><path d="M2337.5 1357.5V1362H2342Z" fill="#3C4A55"/><path d="M2331.5 1361.5H2335M2331.5 1364.3H2340M2331.5 1367.3H2340" stroke="#3C4A55" stroke-width="1"/>
<rect x="2359.5" y="1357.5" width="13" height="14" fill="none" stroke="#3C4A55" stroke-width="1.1"/><path d="M2362 1361.5H2370M2362 1364.3H2370M2362 1367.3H2370" stroke="#3C4A55" stroke-width="1"/>
<rect x="2408" y="1363.3" width="12" height="1.6" fill="#3C4A55"/>
<rect x="2517.5" y="1363.3" width="12" height="1.6" fill="#3C4A55"/><rect x="2522.7" y="1358" width="1.6" height="12" fill="#3C4A55"/>
</svg>
<div class="a" style="left:715px;top:480px;width:292px;height:87px;background:#fff;border:1px solid #C8C8C8;box-shadow:3px 4px 5px -1px rgba(0,0,0,0.13)"></div>
<div class="a" style="left:726px;top:491px;width:270px;height:30px;background:#fff;border:1px solid #C4C4C4;border-radius:4px"></div>
<div class="a" style="left:864px;top:492px;width:1px;height:28px;background:#D0D0D0"></div>
<div class="a" style="left:931px;top:492px;width:1px;height:28px;background:#D0D0D0"></div>
<div class="t" style="left:732.3px;top:501.2px;font-size:13.6px;color:#1a1a1a">Calibri Light</div>
<div class="t" style="left:871px;top:501.2px;font-size:13.6px;color:#1a1a1a">10</div>
<div class="t" style="left:734.3px;top:531.4px;font-size:18.8px;font-weight:bold;color:#3C4A55">B</div>
<svg style="left:0;top:0" width="1000" height="600"><path d="M784.8 533.8L776.3 546.5" stroke="#3C4A55" stroke-width="1.9"/></svg>
<div class="t" style="left:813px;top:531.4px;font-size:18.8px;color:#3C4A55">U</div>
<div class="a" style="left:813px;top:547px;width:14px;height:1.8px;background:#3C4A55"></div>
<div class="t" style="left:954.8px;top:525.9px;font-size:22px;color:#3C4A55;transform:scaleY(1.2);transform-origin:0 18.6px">a</div>
<svg style="left:0;top:0" width="2560" height="1380">
<g fill="#3C4A55"><path d="M850.6 503H860L855.3 508.4Z"/><path d="M918 503H928L923 508.4Z"/><path d="M923.3 537.7H932.7L928 543Z"/><path d="M982.5 537.7H991.8L987.2 543Z"/></g>
<rect x="939.7" y="504.4" width="14.5" height="1.5" fill="#3C4A55"/><rect x="972" y="504.4" width="14" height="1.5" fill="#3C4A55"/><rect x="978.2" y="498.4" width="1.5" height="13.6" fill="#3C4A55"/>
<g stroke="#1EA0E0" stroke-width="1" fill="none"><path d="M850 531.3H864M850 535.5H859M850 539.7H855"/></g>
<path d="M870.5 531L862 539.5" stroke="#3C4A55" stroke-width="2.2" stroke-linecap="round"/>
<path d="M858 540Q863 539.5 862.5 544.5Q862 548.5 853.5 548.7Q855.5 545.5 855.8 543Q856.2 540.3 858 540Z" fill="#FF8C1A"/>
<path d="M854.8 544.3Q858.5 543.6 862.3 545Q861 548.5 853.5 548.7Q854.5 546.5 854.8 544.3Z" fill="#0B6BBE"/>
<path d="M908 529L913 534L903.5 543.3L898.5 538.5Z" fill="#9A9EA2"/>
<path d="M898.5 538.5L903.5 543.3L900.8 546L895.8 541.2Z" fill="#3C4A55"/>
<path d="M895.8 541.2L897.8 543.2L895 545.8L892.8 546.2L893.2 544Z" fill="#FF8C1A"/>
<rect x="891.5" y="548" width="23" height="5" fill="#FFFF00" stroke="#D8D8A0" stroke-width="0.6"/>
<rect x="950.8" y="548.8" width="22.2" height="4.2" fill="#FF0000"/>
</svg>
<div class="a" style="left:715px;top:581px;width:207px;height:355px;background:#fff;border:1px solid #CACACA;box-shadow:3px 4px 5px -1px rgba(0,0,0,0.13)"></div>
<div class="a" style="left:721px;top:623.5px;width:195px;height:34.5px;background:#DEEBF8"></div>
<div class="a" style="left:765px;top:771px;width:156px;height:1px;background:#D0D0D0"></div>
<div class="a" style="left:765px;top:889px;width:156px;height:1px;background:#D0D0D0"></div>
<div class="t" style="left:766px;top:599.2px;font-size:14.9px;color:#1f1f1f">Cut</div>
<div class="t" style="left:766px;top:635.1px;font-size:14.9px;color:#1f1f1f">Copy</div>
<div class="t" style="left:766px;top:670.9px;font-size:14.9px;color:#1f1f1f">Paste</div>
<div class="t" style="left:766px;top:707.3px;font-size:14.9px;color:#1f1f1f">Paste Options</div>
<div class="t" style="left:766px;top:743.2px;font-size:14.9px;color:#1f1f1f">Insert Comment</div>
<div class="t" style="left:766px;top:788.9px;font-size:14.9px;color:#1f1f1f">Font...</div>
<div class="t" style="left:766px;top:824.8px;font-size:14.9px;color:#1f1f1f">Paragraph...</div>
<div class="t" style="left:766px;top:861.0px;font-size:14.9px;color:#1f1f1f">Page Setup...</div>
<div class="t" style="left:766px;top:906.9px;font-size:14.9px;color:#1f1f1f">Link...</div>
<svg style="left:0;top:0" width="2560" height="1380">
<path d="M898.6 707L905 713L898.6 719Z" fill="#8A8A8A"/>
<path d="M731.2 594.5Q729.6 599 732.5 602.5L735.8 606.3L734.6 608.2L736.1 609L737.4 607.3L738.7 609L740.2 608.2L739 606.3L742.3 602.5Q745.2 599 743.6 594.5L737.4 603Z" fill="#3C4A55"/>
<rect x="736.5" y="603.8" width="2" height="2" fill="#2DA0DE"/>
<circle cx="732" cy="611" r="2.4" fill="none" stroke="#3C4A55" stroke-width="1.1"/>
<circle cx="742.8" cy="611" r="2.4" fill="none" stroke="#3C4A55" stroke-width="1.1"/>
<path d="M727.5 628.5H734.5L739 633V645.5Q739 646.2 738.3 646.2H728.2Q727.5 646.2 727.5 645.5Z" fill="#fff" stroke="#9A9EA2" stroke-width="1"/>
<path d="M735.5 633.5H741.5L748.5 640.5V650.3Q748.5 651.2 747.6 651.2H736.4Q735.5 651.2 735.5 650.3Z" fill="#fff" stroke="#3C4A55" stroke-width="1.1"/>
<path d="M741.5 633.5V640.5H748.5Z" fill="#3C4A55"/>
<rect x="728.8" y="666.5" width="15.5" height="20.5" rx="1.2" fill="#FFD09E" stroke="#3C4A55" stroke-width="1"/>
<rect x="734" y="663.8" width="5" height="3" rx="0.8" fill="none" stroke="#3C4A55" stroke-width="1"/>
<rect x="732" y="667" width="9" height="2" fill="#3C4A55"/>
<path d="M735.5 673H740.5L746 678.5V686.2Q746 687 745.2 687H736.3Q735.5 687 735.5 686.2Z" fill="#fff" stroke="#8D9296" stroke-width="1"/>
<path d="M740.5 673V678.5H746Z" fill="#9A9EA2"/>
<rect x="728.5" y="702.5" width="15.5" height="19.5" rx="1.2" fill="#FFD09E" stroke="#3C4A55" stroke-width="1"/>
<rect x="733.8" y="700.5" width="5" height="3" rx="0.8" fill="none" stroke="#3C4A55" stroke-width="1"/>
<rect x="731.8" y="703" width="9" height="2" fill="#3C4A55"/>

<circle cx="741" cy="718.2" r="5.9" fill="#fff"/><path d="M744.60 718.20L745.98 718.67L745.78 719.67L744.33 719.58L743.99 720.20L743.55 720.75L744.19 722.05L743.34 722.62L742.38 721.53L741.70 721.73L741.00 721.80L740.53 723.18L739.53 722.98L739.62 721.53L739.00 721.19L738.45 720.75L737.15 721.39L736.58 720.54L737.67 719.58L737.47 718.90L737.40 718.20L736.02 717.73L736.22 716.73L737.67 716.82L738.01 716.20L738.45 715.65L737.81 714.35L738.66 713.78L739.62 714.87L740.30 714.67L741.00 714.60L741.47 713.22L742.47 713.42L742.38 714.87L743.00 715.21L743.55 715.65L744.85 715.01L745.42 715.86L744.33 716.82L744.53 717.50ZM742.60 718.20A1.60 1.60 0 1 0 739.40 718.20A1.60 1.60 0 1 0 742.60 718.20Z" fill="#4D4D4D" fill-rule="evenodd"/>
<path d="M730.8 737.3H746.3Q748.6 737.3 748.6 739.6V749.2Q748.6 751.5 746.3 751.5H745L743.4 757.8L739.6 751.5H730.8Q728.5 751.5 728.5 749.2V739.6Q728.5 737.3 730.8 737.3Z" fill="#FDDAB4" stroke="#F08A30" stroke-width="1.3" stroke-linejoin="round"/>
<path d="M729.3 799.5L735.3 784.8H736.6L741.2 796.5" fill="none" stroke="#3C4A55" stroke-width="1.8"/><path d="M731.8 793.2H738.8" stroke="#3C4A55" stroke-width="1.3"/>
<circle cx="744.2" cy="796.9" r="6.1000000000000005" fill="#fff"/><path d="M747.94 796.90L749.38 797.39L749.17 798.43L747.66 798.33L747.31 798.98L746.85 799.55L747.51 800.91L746.63 801.50L745.63 800.36L744.93 800.57L744.20 800.64L743.71 802.08L742.67 801.87L742.77 800.36L742.12 800.01L741.55 799.55L740.19 800.21L739.60 799.33L740.74 798.33L740.53 797.63L740.46 796.90L739.02 796.41L739.23 795.37L740.74 795.47L741.09 794.82L741.55 794.25L740.89 792.89L741.77 792.30L742.77 793.44L743.47 793.23L744.20 793.16L744.69 791.72L745.73 791.93L745.63 793.44L746.28 793.79L746.85 794.25L748.21 793.59L748.80 794.47L747.66 795.47L747.87 796.17ZM745.86 796.90A1.66 1.66 0 1 0 742.54 796.90A1.66 1.66 0 1 0 745.86 796.90Z" fill="#4D4D4D" fill-rule="evenodd"/>
<path d="M730 822.5H748M730 826.8H748M730 831H740M730 835.3H738.5M730 839.5H738.5" stroke="#3C4A55" stroke-width="1"/>
<circle cx="744.2" cy="835.1" r="6.1000000000000005" fill="#fff"/><path d="M747.94 835.10L749.38 835.59L749.17 836.63L747.66 836.53L747.31 837.18L746.85 837.75L747.51 839.11L746.63 839.70L745.63 838.56L744.93 838.77L744.20 838.84L743.71 840.28L742.67 840.07L742.77 838.56L742.12 838.21L741.55 837.75L740.19 838.41L739.60 837.53L740.74 836.53L740.53 835.83L740.46 835.10L739.02 834.61L739.23 833.57L740.74 833.67L741.09 833.02L741.55 832.45L740.89 831.09L741.77 830.50L742.77 831.64L743.47 831.43L744.20 831.36L744.69 829.92L745.73 830.13L745.63 831.64L746.28 831.99L746.85 832.45L748.21 831.79L748.80 832.67L747.66 833.67L747.87 834.37ZM745.86 835.10A1.66 1.66 0 1 0 742.54 835.10A1.66 1.66 0 1 0 745.86 835.10Z" fill="#4D4D4D" fill-rule="evenodd"/>
<path d="M728.5 854.5H740L746 860.5V876.5H728.5Z" fill="#fff" stroke="#9A9EA2" stroke-width="1"/><path d="M740 854.5V860.5H746Z" fill="#9A9EA2"/>
<circle cx="741" cy="871.8" r="5.9" fill="#fff"/><path d="M744.60 871.80L745.98 872.27L745.78 873.27L744.33 873.18L743.99 873.80L743.55 874.35L744.19 875.65L743.34 876.22L742.38 875.13L741.70 875.33L741.00 875.40L740.53 876.78L739.53 876.58L739.62 875.13L739.00 874.79L738.45 874.35L737.15 874.99L736.58 874.14L737.67 873.18L737.47 872.50L737.40 871.80L736.02 871.33L736.22 870.33L737.67 870.42L738.01 869.80L738.45 869.25L737.81 867.95L738.66 867.38L739.62 868.47L740.30 868.27L741.00 868.20L741.47 866.82L742.47 867.02L742.38 868.47L743.00 868.81L743.55 869.25L744.85 868.61L745.42 869.46L744.33 870.42L744.53 871.10ZM742.60 871.80A1.60 1.60 0 1 0 739.40 871.80A1.60 1.60 0 1 0 742.60 871.80Z" fill="#4D4D4D" fill-rule="evenodd"/>
<circle cx="736.6" cy="910.8" r="8.8" fill="#fff" stroke="#1E7BC8" stroke-width="1.3"/><path d="M728 908.5H745.2M736.6 902V919.6" stroke="#1E7BC8" stroke-width="1.1"/><path d="M736.6 902Q731.5 910.8 736.6 919.6" fill="none" stroke="#1E7BC8" stroke-width="1"/>
<rect x="735" y="914.5" width="13" height="7" rx="3.5" fill="#fff" stroke="#3C4A55" stroke-width="1.1"/><path d="M738.5 918H744.5" stroke="#3C4A55" stroke-width="1.1"/>
</svg>
<svg style="left:0;top:0" width="2560" height="1380"><path d="M1141.5 528.7L920.5 620.3L920.8 608.3L894.2 644.6L939.6 648.5L931.2 639.7Z" fill="#fff" stroke="#fff" stroke-width="6" stroke-linejoin="round" style="filter:drop-shadow(0 1px 1.5px rgba(0,0,0,0.25))"/><path d="M1141.5 528.7L920.5 620.3L920.8 608.3L894.2 644.6L939.6 648.5L931.2 639.7Z" fill="#E84A4A"/></svg>
</body></html>
